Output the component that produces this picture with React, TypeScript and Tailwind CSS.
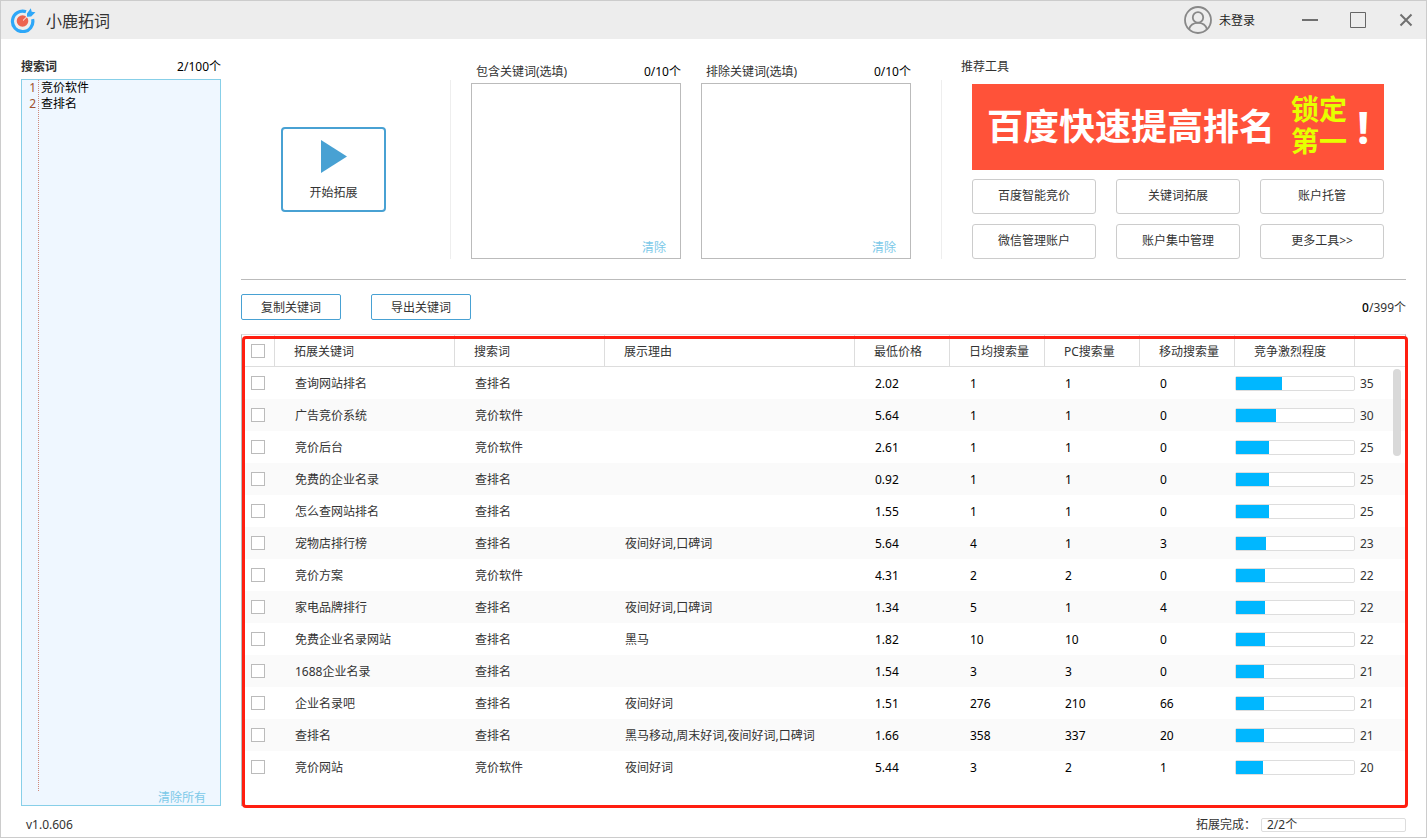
import { useState } from "react"

interface IKeyword {
    word: string,
    source: string,
    reason: string,
    price: string,
    daily: number,
    pc: number,
    mobile: number,
    level: number
}

const keywords: IKeyword[] = [
    { word: "查询网站排名", source: "查排名", reason: "", price: "2.02", daily: 1, pc: 1, mobile: 0, level: 35 },
    { word: "广告竞价系统", source: "竞价软件", reason: "", price: "5.64", daily: 1, pc: 1, mobile: 0, level: 30 },
    { word: "竞价后台", source: "竞价软件", reason: "", price: "2.61", daily: 1, pc: 1, mobile: 0, level: 25 },
    { word: "免费的企业名录", source: "查排名", reason: "", price: "0.92", daily: 1, pc: 1, mobile: 0, level: 25 },
    { word: "怎么查网站排名", source: "查排名", reason: "", price: "1.55", daily: 1, pc: 1, mobile: 0, level: 25 },
    { word: "宠物店排行榜", source: "查排名", reason: "夜间好词,口碑词", price: "5.64", daily: 4, pc: 1, mobile: 3, level: 23 },
    { word: "竞价方案", source: "竞价软件", reason: "", price: "4.31", daily: 2, pc: 2, mobile: 0, level: 22 },
    { word: "家电品牌排行", source: "查排名", reason: "夜间好词,口碑词", price: "1.34", daily: 5, pc: 1, mobile: 4, level: 22 },
    { word: "免费企业名录网站", source: "查排名", reason: "黑马", price: "1.82", daily: 10, pc: 10, mobile: 0, level: 22 },
    { word: "1688企业名录", source: "查排名", reason: "", price: "1.54", daily: 3, pc: 3, mobile: 0, level: 21 },
    { word: "企业名录吧", source: "查排名", reason: "夜间好词", price: "1.51", daily: 276, pc: 210, mobile: 66, level: 21 },
    { word: "查排名", source: "查排名", reason: "黑马移动,周末好词,夜间好词,口碑词", price: "1.66", daily: 358, pc: 337, mobile: 20, level: 21 },
    { word: "竞价网站", source: "竞价软件", reason: "夜间好词", price: "5.44", daily: 3, pc: 2, mobile: 1, level: 20 },
]

const tools = ["百度智能竞价", "关键词拓展", "账户托管", "微信管理账户", "账户集中管理", "更多工具>>"]

const columns = [
    { title: "拓展关键词", width: "w-[180px]" },
    { title: "搜索词", width: "w-[150px]" },
    { title: "展示理由", width: "w-[250px]" },
    { title: "最低价格", width: "w-[95px]" },
    { title: "日均搜索量", width: "w-[95px]" },
    { title: "PC搜索量", width: "w-[95px]" },
    { title: "移动搜索量", width: "w-[95px]" },
    { title: "竞争激烈程度", width: "w-[120px]" },
]

// a full bar stands for this level
const MAX_LEVEL = 89

const checkboxClass = "block size-3.5 appearance-none border border-[#bbb] bg-white checked:bg-[#45a0d2]"
const cellClass = "whitespace-nowrap pl-5 pt-0.5"

function Logo() {
    return (
        <svg className="size-[26px]" viewBox="0 0 26 26" fill="none" aria-hidden="true">
            <path d="M16 4.800A10.200 10.200 0 1 0 22.600 12.200" stroke="#2ea7f8" strokeWidth="3.2" />
            <circle cx="12.500" cy="14" r="5.800" fill="#ec6351" />
            <path d="M13 13.500 17.800 8.800" stroke="#fff" strokeWidth="1" />
            <path d="M17 6.400 20.800 1.200 21.700 4.800 25.400 5.200 21.200 9.600 17 9.800Z" fill="#2ea7f8" />
        </svg>
    )
}

function TitleBar() {
    return (
        <header className="flex h-[38px] items-center bg-[#ededed] pl-[9px] pr-3">
            <Logo />
            <h1 className="ml-2.5 flex-1 pt-0.5 text-base text-[#333]">小鹿拓词</h1>
            <button type="button" className="mr-[47px] flex items-center gap-[7px] text-[#222]">
                <svg className="size-7" viewBox="0 0 28 28" fill="none" stroke="#888" strokeWidth="1.8" aria-hidden="true">
                    <circle cx="14" cy="14" r="13" />
                    <circle cx="14" cy="11.4" r="5.2" />
                    <path d="M5 23.2C6.2 18.8 9.6 16.8 14 16.8S21.8 18.8 23 23.2" />
                </svg>
                <span className="pt-0.5">未登录</span>
            </button>
            <div className="flex gap-8">
                <button type="button" aria-label="最小化">
                    <svg className="size-4" viewBox="0 0 16 16" stroke="#707070" strokeWidth="2"><path d="M0 8H16" /></svg>
                </button>
                <button type="button" aria-label="最大化">
                    <svg className="size-4" viewBox="0 0 16 16" fill="none" stroke="#666" strokeWidth="1"><path d="M.5 .5H15.5V15.5H.5Z" /></svg>
                </button>
                <button type="button" aria-label="关闭">
                    <svg className="size-4" viewBox="0 0 16 16" stroke="#707070" strokeWidth="2"><path d="M2.5 2.5 13.5 13.5M13.5 2.5 2.5 13.5" /></svg>
                </button>
            </div>
        </header>
    )
}

function SearchWords() {
    const [words, setWords] = useState("竞价软件\n查排名")

    const lines = words.split("\n")

    return (
        <aside className="flex w-[200px] shrink-0 flex-col pt-[18px]">
            <div className="mb-0.5 flex justify-between leading-5">
                <label htmlFor="words" className="font-bold">搜索词</label>
                <span className="text-black">{lines.length}/100个</span>
            </div>
            <div className="flex flex-1 flex-col border border-[#87cfe8] bg-[#eff7ff]">
                <div className="flex flex-1">
                    <ol className="w-[17px] border-r border-dotted border-[#d08a7a] pr-0.5 text-right leading-4 text-[#a0522d]">
                        {lines.map((_, i) => <li key={i}>{i + 1}</li>)}
                    </ol>
                    <textarea
                        id="words"
                        value={words}
                        onChange={(e) => setWords(e.target.value)}
                        className="min-w-0 flex-1 resize-none pl-0.5 leading-4 text-black outline-none" />
                </div>
                <button type="button" onClick={() => setWords("")} className="mr-3.5 self-end leading-[14px] text-[#7cc9e8]">清除所有</button>
            </div>
        </aside>
    )
}

function FilterBox({ id, label }: { id: string, label: string }) {
    const [value, setValue] = useState("")

    const count = value.split("\n").filter(Boolean).length

    return (
        <div className="w-[210px]">
            <div className="flex justify-between pl-[5px] leading-[22px]">
                <label htmlFor={id}>{label}</label>
                <span className="text-black">{count}/10个</span>
            </div>
            <div className="flex h-44 flex-col border border-[#bbb]">
                <textarea
                    id={id}
                    value={value}
                    onChange={(e) => setValue(e.target.value)}
                    className="flex-1 resize-none px-1 outline-none" />
                <button type="button" onClick={() => setValue("")} className="mr-3.5 self-end leading-5 text-[#7cc9e8]">清除</button>
            </div>
        </div>
    )
}

function Tools() {
    return (
        <section className="flex-1">
            <h2 className="leading-5">推荐工具</h2>
            <div className="ml-[11px] mt-[7px] w-[412px]">
                <a href="#" className="flex h-[86px] items-center bg-[#ff5239] pl-[15px] font-bold text-white">
                    <span className="text-4xl">百度快速提高排名</span>
                    <span className="ml-4 font-['Liberation_Sans','Noto_Sans_CJK_SC',sans-serif] text-[28px] leading-8 text-[#e6ff00]">
                        <span className="block">锁定</span>
                        <span className="block">第一</span>
                    </span>
                    <span className="ml-2.5 text-[44px] leading-none">!</span>
                </a>
                <div className="mt-[9px] grid grid-cols-3 gap-x-5 gap-y-2.5">
                    {tools.map((tool) => (
                        <button key={tool} type="button" className="h-[35px] rounded-[3px] border border-[#ccc] pb-0.5">{tool}</button>
                    ))}
                </div>
            </div>
        </section>
    )
}

function KeywordTable() {
    return (
        <div className="relative flex-1 border border-[#bbb] border-t-[#ddd]">
            <table className="w-full table-fixed border-separate border-spacing-0 text-left">
                <thead>
                    <tr className="h-8">
                        <th className="w-[33px] border-b border-r border-[#ddd] pl-[9px]">
                            <input type="checkbox" aria-label="全选" className={checkboxClass} />
                        </th>
                        {columns.map((column) => (
                            <th key={column.title} className={`${column.width} border-b border-r border-[#ddd] pl-[19px] pt-0.5 font-normal`}>{column.title}</th>
                        ))}
                        <th className="border-b border-[#ddd]" />
                    </tr>
                </thead>
                <tbody>
                    {keywords.map((item) => (
                        <tr key={item.word} className="h-8 even:bg-[#fafafa]">
                            <td className="pl-[9px]">
                                <input type="checkbox" aria-label={item.word} className={checkboxClass} />
                            </td>
                            <td className={cellClass}>{item.word}</td>
                            <td className={cellClass}>{item.source}</td>
                            <td className={cellClass}>{item.reason}</td>
                            <td className={`${cellClass} text-black`}>{item.price}</td>
                            <td className={`${cellClass} text-black`}>{item.daily}</td>
                            <td className={`${cellClass} text-black`}>{item.pc}</td>
                            <td className={`${cellClass} text-black`}>{item.mobile}</td>
                            <td>
                                <div className="h-[15px] rounded-xs border border-[#ddd] bg-white">
                                    <div className="h-full bg-[#00b7ff]" style={{ width: `${(item.level / MAX_LEVEL) * 100}%` }} />
                                </div>
                            </td>
                            <td className="pl-[5px] pt-0.5">{item.level}</td>
                        </tr>
                    ))}
                </tbody>
            </table>
            <div className="absolute right-1 top-[34px] h-[87px] w-2 rounded-full bg-[#d9d9d9]" />
            <div className="pointer-events-none absolute -bottom-[3px] -right-[3px] left-0 top-px rounded border-3 border-[#ff1e10]" />
        </div>
    )
}

function App() {
    return (
        <div className="flex min-h-screen flex-col border border-[#ccc] bg-white font-['Noto_Sans','Noto_Sans_CJK_SC',sans-serif] text-xs text-[#333]">
            <TitleBar />
            <div className="flex flex-1 gap-5 px-5">
                <SearchWords />
                <main className="flex min-w-0 flex-1 flex-col">
                    <div className="flex items-end border-b border-[#bbb] pb-5 pt-[18px]">
                        <div className="flex h-[179px] w-[210px] items-center border-r border-[#eee] pl-10">
                            <button type="button" className="flex h-[85px] w-[105px] flex-col items-center rounded border-2 border-[#48a1d3] pt-[11px]">
                                <svg className="h-[33px] w-[26px]" viewBox="0 0 26 33" fill="#48a1d3" aria-hidden="true"><path d="M0 0 26 16.5 0 33Z" /></svg>
                                <span className="mt-2.5 leading-5">开始拓展</span>
                            </button>
                        </div>
                        <div className="flex gap-5 px-5 pr-[30px]">
                            <FilterBox id="include" label="包含关键词(选填)" />
                            <FilterBox id="exclude" label="排除关键词(选填)" />
                        </div>
                        <div className="mr-[19px] h-[179px] w-px bg-[#eee]" />
                        <Tools />
                    </div>
                    <div className="my-3.5 flex items-center">
                        <button type="button" className="h-[26px] w-[100px] rounded-xs border border-[#48a1d3] pt-0.5">复制关键词</button>
                        <button type="button" className="ml-[30px] h-[26px] w-[100px] rounded-xs border border-[#48a1d3] pt-0.5">导出关键词</button>
                        <span className="ml-auto pt-0.5"><span className="font-medium text-black">0</span>/399个</span>
                    </div>
                    <KeywordTable />
                </main>
            </div>
            <footer className="flex h-[31px] items-center justify-between pl-[25px] pr-5 pt-[7px]">
                <span>v1.0.606</span>
                <div className="flex items-center gap-[5px]">
                    <span>拓展完成：</span>
                    <output className="h-3.5 w-[145px] rounded-xs border border-[#ddd] pl-[5px] leading-3">2/2个</output>
                </div>
            </footer>
        </div>
    )
}

export default App
